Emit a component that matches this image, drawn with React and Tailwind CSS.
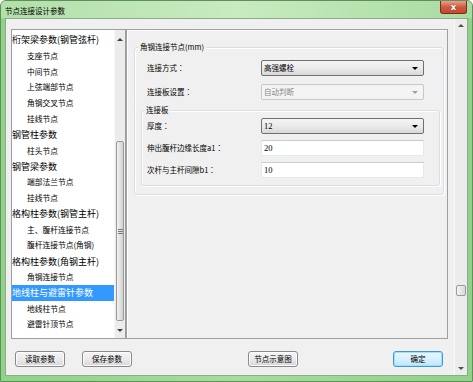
import React from "react";

const font = "font-['Noto_Sans_CJK_SC','Noto_Sans_CJK_JP',sans-serif]";

function Tri({ up = false, color = "border-t-black", colorUp = "border-b-black" }) {
  return up ? (
    <div className={`w-0 h-0 border-l-[3px] border-r-[3px] border-b-[3px] border-l-transparent border-r-transparent ${colorUp}`} />
  ) : (
    <div className={`w-0 h-0 border-l-[3px] border-r-[3px] border-t-[3px] border-l-transparent border-r-transparent ${color}`} />
  );
}

function Select({ value, disabled }) {
  return (
    <div
      className={
        disabled
          ? "w-[163px] h-[16px] rounded-[2px] border border-[#c5c9cc] bg-[#f4f4f4] flex items-center justify-between pl-[2px] pr-[5px]"
          : "w-[163px] h-[16px] rounded-[2px] border border-[#707070] bg-gradient-to-b from-[#f4f4f4] via-[#ebebeb] to-[#d8d8d8] flex items-center justify-between pl-[2px] pr-[5px]"
      }
    >
      <span className={`text-[7.5px] leading-none ${disabled ? "text-[#8a8a8a]" : "text-black"}`}>{value}</span>
      <Tri color={disabled ? "border-t-[#a0a0a0]" : "border-t-black"} />
    </div>
  );
}

function Input({ value }) {
  return (
    <div className="w-[163px] h-[16px] bg-white border border-[#e3e9ef] border-t-[#c8cbd0] flex items-center pl-[2px]">
      <span className="text-[8.5px] leading-none text-black font-['Liberation_Serif',serif]">{value}</span>
    </div>
  );
}

function Btn({ children, primary, className = "" }) {
  return (
    <div
      className={`w-[50px] h-[16px] rounded-[3px] border flex items-center justify-center ${
        primary
          ? "border-[#3c9bd6] bg-gradient-to-b from-[#eaf6fd] via-[#d9f0fc] to-[#bee6fd] shadow-[inset_0_0_0_1px_#9fe1fb]"
          : "border-[#8a8a8a] bg-gradient-to-b from-[#f4f4f4] via-[#ebebeb] to-[#d6d6d6] shadow-[inset_0_0_0_1px_#fcfcfc]"
      } ${className}`}
    >
      <span className="text-[7.5px] leading-none text-black">{children}</span>
    </div>
  );
}

const items = [
  { t: "桁架梁参数(钢管弦杆)", p: true },
  { t: "支座节点" },
  { t: "中间节点" },
  { t: "上弦端部节点" },
  { t: "角钢交叉节点" },
  { t: "挂线节点" },
  { t: "钢管柱参数", p: true },
  { t: "柱头节点" },
  { t: "钢管梁参数", p: true },
  { t: "端部法兰节点" },
  { t: "挂线节点" },
  { t: "格构柱参数(钢管主杆)", p: true },
  { t: "主、腹杆连接节点" },
  { t: "腹杆连接节点(角钢)" },
  { t: "格构柱参数(角钢主杆)", p: true },
  { t: "角钢连接节点" },
  { t: "地线柱与避雷针参数", p: true, sel: true },
  { t: "地线柱节点" },
  { t: "避雷针顶节点" },
];

function Row({ label, children, pl, mt }) {
  return (
    <div className={`flex items-center ${pl} ${mt}`}>
      <div className="w-[114px] text-[7.5px] leading-none text-black">
        {label}
        <span className="font-['Noto_Sans_CJK_TC',sans-serif]">：</span>
      </div>
      {children}
    </div>
  );
}

export default function App() {
  return (
    <div className={`${font} w-[473px] h-[382px] bg-gradient-to-r from-[#8fd288] via-[#a6dc9e] to-[#8fd288] border border-[#5f8f5a] rounded-t-[6px] flex flex-col overflow-hidden`}>
      {/* title bar */}
      <div className="h-[17px] flex items-start justify-between bg-gradient-to-r from-[#b2dfaa] via-[#c8ebc0] to-[#a9dca1]">
        <div className="pl-[4px] pt-[6px] text-[7.5px] leading-none text-black">节点连接设计参数</div>
        <div className="mr-[5px] w-[27px] h-[13px] rounded-b-[3px] border border-t-0 border-[#7a2a1e] bg-gradient-to-b from-[#e8a08e] via-[#d0583e] to-[#c24a30] flex items-center justify-center">
          <span className="text-white text-[9px] font-bold leading-none font-['DejaVu_Sans',sans-serif] [text-shadow:0_0_1px_#5a1a10]">x</span>
        </div>
      </div>
      {/* client */}
      <div className="mx-[4px] h-[358px] border border-[#8fa98b] bg-[#f0f0f0] flex">
        {/* main area */}
        <div className="w-[448px] flex flex-col pl-[5px] pt-[10px]">
          <div className="flex h-[310px]">
            {/* list box */}
            <div className="w-[115px] h-[310px] bg-white border border-[#9a9ea6] flex">
              <div className="flex-1 pt-[2px] flex flex-col">
                {items.map((it, i) => (
                  <div
                    key={i}
                    className={`h-[15.8px] flex items-center ${it.p ? "pl-[0px] text-[9px]" : "pl-[15px] text-[7.75px]"} ${
                      it.sel ? "bg-[#3399ff] text-white" : "text-black"
                    } leading-none whitespace-nowrap`}
                  >
                    {it.t}
                  </div>
                ))}
              </div>
              {/* list scrollbar */}
              <div className="w-[11px] h-full bg-[#ececec] border-l border-[#f7f7f7] flex flex-col items-center">
                <div className="h-[16px] flex items-center justify-center pt-[2px]">
                  <Tri up colorUp="border-b-[#404040]" />
                </div>
                <div className="flex-1 w-full px-[1px] pt-[95px] pb-[1px]">
                  <div className="w-full h-[180px] rounded-[2px] border border-[#9a9a9a] bg-gradient-to-r from-[#f2f2f2] via-[#e2e2e2] to-[#d0d0d0] flex flex-col items-center justify-center gap-[1px]">
                    <div className="w-[5px] h-[1px] bg-[#7a7a7a]" />
                    <div className="w-[5px] h-[1px] bg-[#7a7a7a]" />
                    <div className="w-[5px] h-[1px] bg-[#7a7a7a]" />
                  </div>
                </div>
                <div className="h-[15px] flex items-center justify-center">
                  <Tri color="border-t-[#404040]" />
                </div>
              </div>
            </div>
            {/* right panel */}
            <div className="w-[322px] h-[310px] border border-[#a0a0a0] shadow-[inset_1px_1px_0_#ffffff] pl-[7px] pt-[17px]">
              <div className="relative w-[310px] h-[148px] border border-[#d5dfe5] rounded-[3px] shadow-[inset_1px_1px_0_#ffffff,1px_1px_0_#ffffff]">
                <span className="absolute -top-[5px] left-[3px] px-[2px] bg-[#f0f0f0] text-[7.5px] leading-none text-black">角钢连接节点(mm)</span>
                <Row label="连接方式" pl="pl-[12px]" mt="mt-[12px]">
                  <Select value="高强螺栓" />
                </Row>
                <Row label="连接板设置" pl="pl-[12px]" mt="mt-[8px]">
                  <Select value="自动判断" disabled />
                </Row>
                <div className="relative ml-[6px] mt-[10px] w-[299px] h-[76px] border border-[#d5dfe5] rounded-[3px] shadow-[inset_1px_1px_0_#ffffff,1px_1px_0_#ffffff]">
                  <span className="absolute -top-[5px] left-[3px] px-[1px] bg-[#f0f0f0] text-[7.5px] leading-none text-black">连接板</span>
                  <Row label="厚度" pl="pl-[5px]" mt="mt-[7px]">
                    <Select value={<span className="font-['Liberation_Serif',serif] text-[8.5px]">12</span>} />
                  </Row>
                  <Row label="伸出腹杆边缘长度a1" pl="pl-[5px]" mt="mt-[6px]">
                    <Input value="20" />
                  </Row>
                  <Row label="次杆与主杆间隙b1" pl="pl-[5px]" mt="mt-[6px]">
                    <Input value="10" />
                  </Row>
                </div>
              </div>
            </div>
          </div>
          {/* buttons */}
          <div className="flex mt-[12px] pl-[4px]">
            <Btn>读取参数</Btn>
            <Btn className="ml-[17px]">保存参数</Btn>
            <Btn className="ml-[116px]">节点示意图</Btn>
            <Btn primary className="ml-[95px]">确定</Btn>
          </div>
        </div>
        {/* main scrollbar */}
        <div className="w-[13px] h-full bg-[#ececec] border-l border-[#f8f8f8] flex flex-col items-center">
          <div className="h-[13px] flex items-center justify-center">
            <Tri up colorUp="border-b-[#505050]" />
          </div>
          <div className="flex-1 w-full px-[1px] pt-[253px]">
            <div className="w-full h-[11px] rounded-[2px] border border-[#9a9a9a] bg-gradient-to-r from-[#f4f4f4] to-[#d8d8d8]" />
          </div>
          <div className="h-[13px] flex items-center justify-center">
            <Tri color="border-t-[#505050]" />
          </div>
        </div>
      </div>
    </div>
  );
}
